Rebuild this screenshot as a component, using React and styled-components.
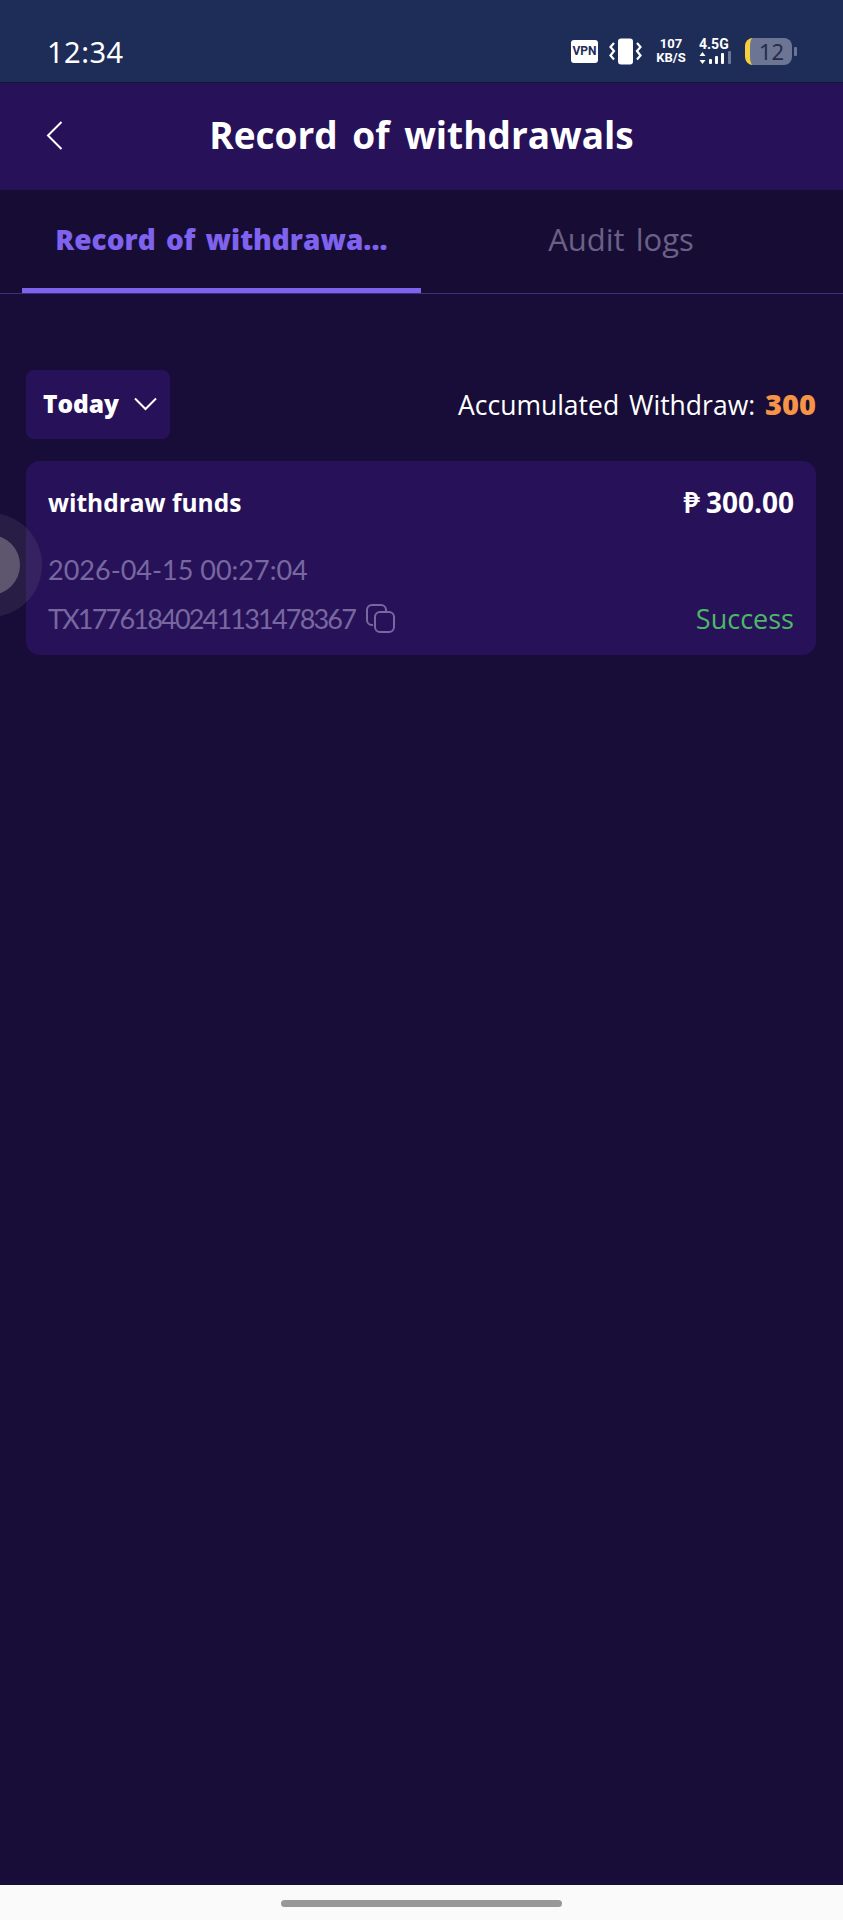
import React from 'react';
import styled, {createGlobalStyle} from 'styled-components';

const GlobalStyle = createGlobalStyle`
  html, body {
    margin: 0;
    padding: 0;
    background: #170d38;
  }
  * {
    box-sizing: border-box;
  }
`;

const Page = styled.div`
  position: relative;
  width: 843px;
  height: 1920px;
  display: flex;
  flex-direction: column;
  overflow: hidden;
  background: #170d38;
  font-family: "Open Sans", Lato, sans-serif;
  color: #fff;
`;

const StatusBar = styled.div`
  height: 83px;
  flex: none;
  display: flex;
  align-items: center;
  justify-content: space-between;
  padding: 20px 46px 0 47px;
  background: #1e2c58;
  border-bottom: 1px solid #14172f;
`;

const Clock = styled.span`
  font-family: "Noto Sans", sans-serif;
  font-size: 29px;
  letter-spacing: 0.5px;
`;

const StatusIcons = styled.div`
  display: flex;
  align-items: center;
`;

const VpnBadge = styled.span`
  width: 27px;
  height: 23px;
  display: flex;
  align-items: center;
  justify-content: center;
  border-radius: 3px;
  background: #fff;
  color: #1e2c58;
  font: 700 12px Roboto, sans-serif;
`;

const NetSpeed = styled.div`
  width: 32px;
  margin-left: 13px;
  font: 700 13px/14px Roboto, sans-serif;
  text-align: center;
`;

const NetType = styled.div`
  width: 34px;
  margin-left: 12px;
  display: flex;
  flex-direction: column;
  align-items: flex-start;
  font: 700 14px/14px Roboto, sans-serif;
`;

const Battery = styled.div`
  width: 47px;
  height: 27px;
  margin-left: 12px;
  display: flex;
  align-items: center;
  justify-content: center;
  padding-left: 1px;
  border-radius: 8px;
  border-left: 5px solid #f6cf3c;
  background: #6c7594;
  color: #262c48;
  font: 400 22px "Noto Sans", sans-serif;
`;

const BatteryCap = styled.span`
  width: 3px;
  height: 9px;
  margin-left: 2px;
  border-radius: 1px;
  background: #6c7594;
`;

const Header = styled.header`
  height: 107px;
  flex: none;
  position: relative;
  display: flex;
  align-items: center;
  justify-content: center;
  padding-bottom: 4px;
  background: #27125a;
`;

const BackButton = styled.button`
  position: absolute;
  left: 46px;
  top: 38px;
  padding: 0;
  display: flex;
  border: 0;
  background: none;
`;

const Title = styled.h1`
  margin: 0;
  font-size: 37px;
  font-weight: 700;
  word-spacing: 5px;
`;

const Tabs = styled.nav`
  height: 104px;
  flex: none;
  display: flex;
  padding: 0 0 0 22px;
  background: #170d34;
  border-bottom: 1px solid #3f2f78;
`;

const Tab = styled.div`
  flex: 0 0 ${(p) => p.$width}px;
  display: flex;
  align-items: center;
  justify-content: center;
  font-size: ${(p) => (p.$active ? 28 : 31)}px;
  word-spacing: 3px;
  font-weight: ${(p) => (p.$active ? 800 : 500)};
  color: ${(p) => (p.$active ? '#7f62ee' : '#6b6085')};
  border-bottom: 5px solid ${(p) => (p.$active ? '#7f62ee' : 'transparent')};
`;

const Content = styled.main`
  flex: 1;
  padding: 76px 27px 0 26px;
`;

const FilterRow = styled.div`
  display: flex;
  align-items: center;
  justify-content: space-between;
`;

const DateSelect = styled.div`
  width: 144px;
  height: 69px;
  display: flex;
  align-items: center;
  gap: 15px;
  padding-left: 17px;
  padding-bottom: 2px;
  border-radius: 8px;
  background: #27125a;
  font-size: 24.5px;
  font-weight: 800;
`;

const Accumulated = styled.div`
  font-size: 26.5px;
  word-spacing: 3px;
  padding-bottom: 2px;
`;

const AccumulatedValue = styled.span`
  color: #f59347;
  font-size: 29px;
  font-weight: 800;
`;

const RecordCard = styled.article`
  height: 194px;
  margin-top: 22px;
  padding: 22px 22px 0;
  border-radius: 14px;
  background: #27125a;
`;

const CardRow = styled.div`
  display: flex;
  align-items: center;
  justify-content: space-between;
  margin-top: ${(p) => p.$gap || 0}px;
`;

const RecordName = styled.span`
  font-size: 24.5px;
  font-weight: 700;
`;

const Amount = styled.span`
  font-size: 28px;
  font-weight: 700;
  word-spacing: -1px;
`;

const Muted = styled.span`
  display: flex;
  align-items: center;
  gap: 11px;
  font-family: Lato, sans-serif;
  font-size: 27px;
  line-height: 36px;
  color: #78689f;
  letter-spacing: ${(p) => p.$spacing || 0}px;
`;

const Status = styled.span`
  font-size: 27px;
  color: #4cb866;
`;

const FloatingBall = styled.div`
  position: absolute;
  left: -62px;
  top: 513px;
  width: 104px;
  height: 104px;
  display: flex;
  align-items: center;
  justify-content: center;
  border-radius: 50%;
  background: rgba(110, 100, 125, 0.2);

  &::after {
    content: '';
    width: 60px;
    height: 60px;
    border-radius: 50%;
    background: rgba(112, 104, 124, 0.75);
  }
`;

const NavBar = styled.div`
  height: 35px;
  flex: none;
  display: flex;
  justify-content: center;
  padding-top: 15px;
  background: #fafafa;
`;

const NavHandle = styled.span`
  width: 281px;
  height: 7px;
  border-radius: 4px;
  background: #989898;
`;

function VibrateIcon() {
  return (
    <svg width="33" height="27" viewBox="0 0 33 27" fill="none" style={{marginLeft: 11}}>
      <rect x="9" y="0.5" width="15" height="26" rx="3" fill="#fff" />
      <path d="M5 5 1.5 9 5 13 1.5 17.5 5 21.5M28 5l3.5 4L28 13l3.5 4.5L28 21.5" stroke="#fff" strokeWidth="2.2" />
    </svg>
  );
}

function SignalIcon() {
  return (
    <svg width="34" height="14" viewBox="0 0 34 14" fill="#fff">
      <path d="M3.5 1 6.5 5h-6zM3.5 13 .5 9h6z" />
      <rect x="10" y="8" width="3" height="5" rx="1" />
      <rect x="16" y="5" width="3" height="8" rx="1" />
      <rect x="22" y="2" width="3" height="11" rx="1" />
      <rect x="29" y="0" width="3" height="13" rx="1" fill="#6c7594" />
    </svg>
  );
}

function CopyIcon() {
  return (
    <svg width="29" height="29" viewBox="0 0 29 29" fill="none" stroke="#78689f" strokeWidth="2">
      <path d="M7 21H6a5 5 0 0 1-5-5V6a5 5 0 0 1 5-5h9a5 5 0 0 1 5 5v1" />
      <rect x="9" y="8" width="19" height="20" rx="5" />
    </svg>
  );
}

export default function App() {
  return (
    <Page>
      <GlobalStyle />
      <StatusBar>
        <Clock>12:34</Clock>
        <StatusIcons>
          <VpnBadge>VPN</VpnBadge>
          <VibrateIcon />
          <NetSpeed>107<br />KB/S</NetSpeed>
          <NetType>4.5G<SignalIcon /></NetType>
          <Battery>12</Battery>
          <BatteryCap />
        </StatusIcons>
      </StatusBar>
      <Header>
        <BackButton aria-label="back">
          <svg width="17" height="29" viewBox="0 0 17 29" fill="none" stroke="#fff" strokeWidth="2">
            <path d="M15.5 1 2 14.5 15.5 28" />
          </svg>
        </BackButton>
        <Title>Record of withdrawals</Title>
      </Header>
      <Tabs>
        <Tab $active $width={399}>Record of withdrawa...</Tab>
        <Tab $width={400}>Audit logs</Tab>
      </Tabs>
      <Content>
        <FilterRow>
          <DateSelect>
            Today
            <svg width="23" height="14" viewBox="0 0 23 14" fill="none" stroke="#fff" strokeWidth="2">
              <path d="M1 1.5 11.5 12 22 1.5" />
            </svg>
          </DateSelect>
          <Accumulated>
            Accumulated Withdraw: <AccumulatedValue>300</AccumulatedValue>
          </Accumulated>
        </FilterRow>
        <RecordCard>
          <CardRow>
            <RecordName>withdraw funds</RecordName>
            <Amount>₱ 300.00</Amount>
          </CardRow>
          <CardRow $gap={31}>
            <Muted>2026-04-15 00:27:04</Muted>
          </CardRow>
          <CardRow $gap={12}>
            <Muted $spacing={-1.8}>TX17761840241131478367<CopyIcon /></Muted>
            <Status>Success</Status>
          </CardRow>
        </RecordCard>
      </Content>
      <FloatingBall />
      <NavBar>
        <NavHandle />
      </NavBar>
    </Page>
  );
}
